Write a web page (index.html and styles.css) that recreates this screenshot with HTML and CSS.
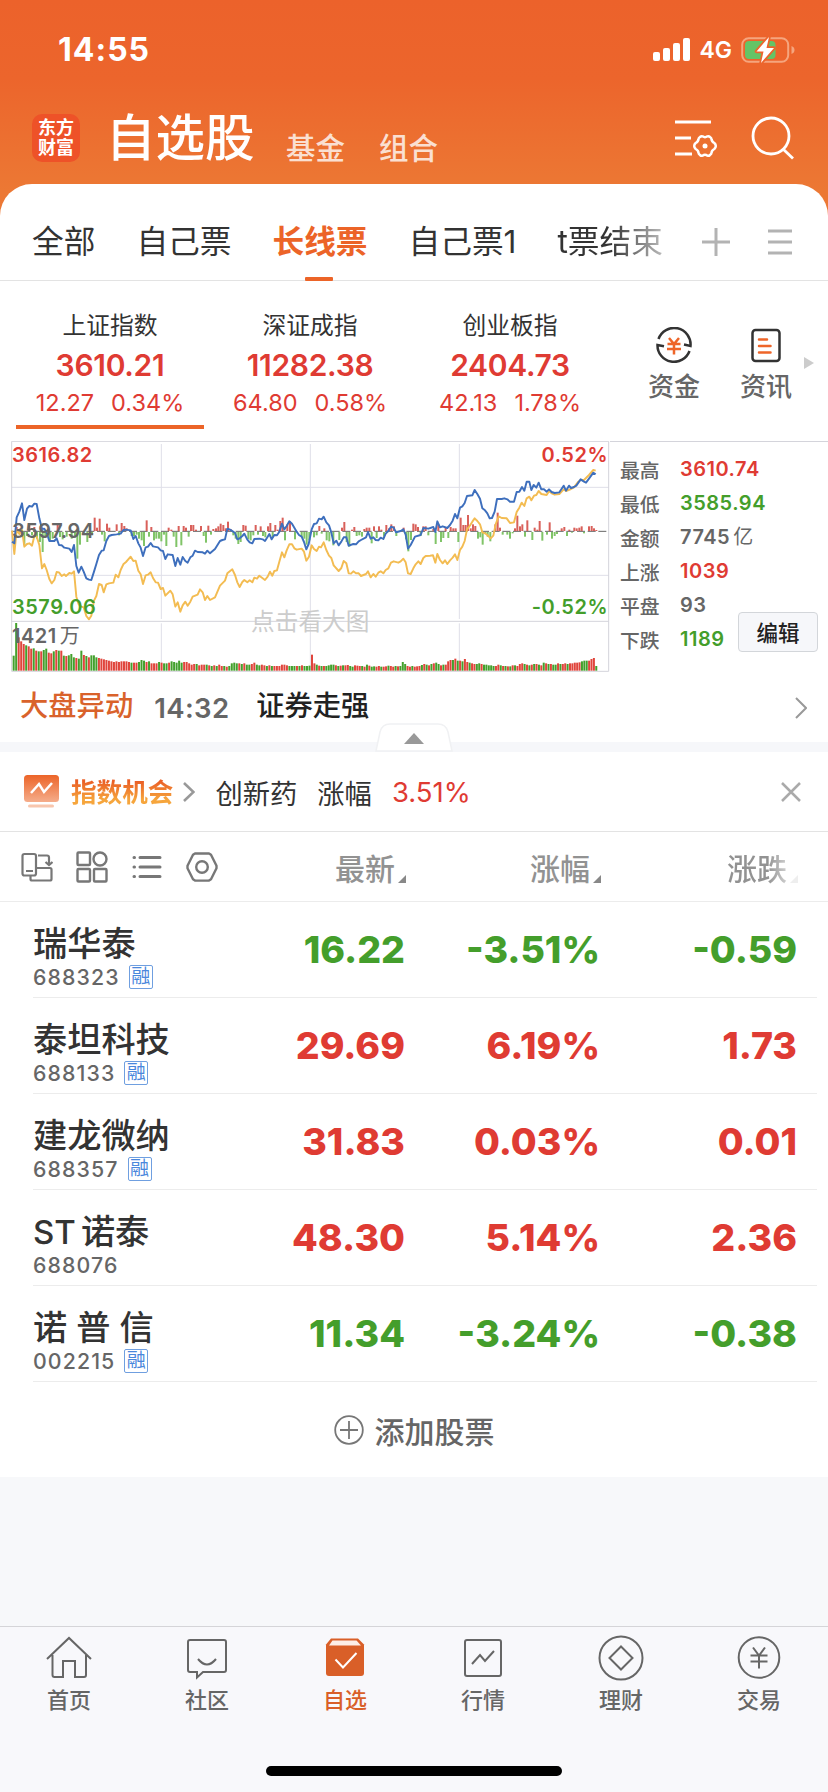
FILE: index.html
```html
<!DOCTYPE html>
<html lang="zh-CN">
<head>
  <meta charset="UTF-8">
  <meta name="viewport" content="width=device-width, initial-scale=1.0">
  <title>自选股</title>
  <link rel="stylesheet" href="styles.css">
</head>
<body>
  <header class="header">
    <div class="status-bar">
      <span class="time">14:55</span>
      <div class="status-right">
        <svg width="38" height="24" viewBox="0 0 38 24" fill="#fff">
          <rect x="0" y="14" width="7" height="9" rx="2"/>
          <rect x="10" y="10" width="7" height="13" rx="2"/>
          <rect x="20" y="5" width="7" height="18" rx="2"/>
          <rect x="30" y="0" width="7" height="23" rx="2"/>
        </svg>
        <span class="network">4G</span>
        <svg width="54" height="28" viewBox="0 0 54 28">
          <rect x="1.2" y="2.2" width="46" height="23.600" rx="6.500" fill="none" stroke="#f5a57e" stroke-width="2"/>
          <path d="M50.500 10v8q3-1.200 3-4t-3-4z" fill="#f5a57e"/>
          <rect x="4" y="5" width="30.500" height="18" rx="4" fill="#64c466"/>
          <path d="M28 1 15.500 15.500h7L20 27 33 12h-7.500z" fill="#fff" stroke="#ec652c" stroke-width="3.500" paint-order="stroke" stroke-linejoin="round"/>
        </svg>
      </div>
    </div>
    <div class="title-bar">
      <div class="logo"><span>东方</span><span>财富</span></div>
      <h1>自选股</h1>
      <span class="sub-title">基金</span>
      <span class="sub-title">组合</span>
      <svg class="icon-manage" width="44" height="40" viewBox="0 0 44 40" fill="none" stroke="#fff" stroke-width="2.800">
        <path d="M1 4h36M1 20h16M1 36h17"/>
        <path stroke-width="2.500" stroke-linejoin="round" d="M28.500 18.300q2.500 1.700 5 0 1.200-.5 2.500.7 1.500 1 1.500 2.200.2 2.500 2.800 3.800 1.500 1.300 1.500 3t-1.500 3q-2.600 1.300-2.800 3.800 0 1.200-1.500 2.200-1.300 1.200-2.500.7-2.500-1.700-5 0-1.200.5-2.500-.7-1.500-1-1.500-2.200-.2-2.500-2.800-3.800-1.500-1.300-1.500-3t1.500-3q2.600-1.300 2.800-3.800 0-1.200 1.500-2.200 1.300-1.200 2.500-.7z"/>
        <circle cx="31" cy="28" r="2.500" fill="#fff" stroke="none"/>
      </svg>
      <svg class="icon-search" width="44" height="44" viewBox="0 0 44 44" fill="none" stroke="#fff" stroke-width="2.800">
        <circle cx="20" cy="20" r="18"/>
        <path d="m32 33 10 9.500"/>
      </svg>
    </div>
  </header>

  <main class="card">
    <nav class="tabs">
      <span class="tab">全部</span>
      <span class="tab">自己票</span>
      <span class="tab active">长线票</span>
      <span class="tab">自己票1</span>
      <span class="tab fade">t票结束</span>
      <svg class="icon-plus" width="28" height="28" viewBox="0 0 28 28" stroke="#b3b3b3" stroke-width="3"><path d="M0 14h28M14 0v28"/></svg>
      <svg class="icon-menu" width="24" height="26" viewBox="0 0 24 26" stroke="#b3b3b3" stroke-width="3"><path d="M0 2h24M0 13h24M0 24h24"/></svg>
    </nav>

    <section class="indexes">
      <div class="index active">
        <div class="index-name">上证指数</div>
        <div class="index-value">3610.21</div>
        <div class="index-change"><span>12.27</span><span>0.34%</span></div>
      </div>
      <div class="index">
        <div class="index-name">深证成指</div>
        <div class="index-value">11282.38</div>
        <div class="index-change"><span>64.80</span><span>0.58%</span></div>
      </div>
      <div class="index">
        <div class="index-name">创业板指</div>
        <div class="index-value">2404.73</div>
        <div class="index-change"><span>42.13</span><span>1.78%</span></div>
      </div>
      <div class="shortcut first">
        <svg width="36" height="36" viewBox="0 0 36 36" fill="none" stroke="#333" stroke-width="2.500">
          <path d="M2.500 12A16.500 16.500 0 0 1 34.500 19l-6.500-1.500M33.500 24A16.500 16.500 0 0 1 1.500 18l6.500 1.200"/>
          <path stroke="#ee6529" d="m13 11 5 6 5-6M11.500 17h13M11 22h14M18 17v10.500"/>
        </svg>
        <span>资金</span>
      </div>
      <div class="shortcut">
        <svg width="36" height="36" viewBox="0 0 36 36" fill="none" stroke="#333" stroke-width="2.500">
          <rect x="4.500" y="3" width="27" height="31" rx="3"/>
          <path stroke="#ee6529" stroke-linecap="round" d="M11 12.500h8M11 19h11.500M11 25.500h11.500"/>
        </svg>
        <span>资讯</span>
      </div>
      <div class="more-arrow"></div>
    </section>

    <section class="quote">
      <div class="chart">
        <svg id="chart" width="599" height="232" viewBox="33 33 1797 696">
          <g fill="none" stroke="#dfdfe8" stroke-width="3">
            <path d="M35 172H1826M35 436H1826M484 42V567M931 42V567M1378 42V567M484 580V722M931 580V722M1378 580V722"/>
            <path stroke="#d4d4db" d="M35 34V724M35 34H1826M35 574H1826M35 724H1826M1826 34V724"/>
          </g>
          <path d="M35 304H1826" stroke="#666" stroke-width="3" stroke-dasharray="24 8"/>
          <g id="bars"></g>
          <polyline class="line avg" points="36,302 43,372 50,300 58,312 66,300 73,350 81,342 88,340 96,347 103,318 110,320 118,345 126,415 133,402 140,420 148,447 155,460 163,450 170,426 177,427 185,438 193,433 198,438 208,429 215,431 222,424 229,500 236,523 244,530 251,532 259,558 267,568 274,557 282,512 289,498 297,462 305,465 311,487 319,463 327,460 340,458 347,434 355,442 362,420 370,403 378,396 392,380 400,393 407,392 415,422 422,433 429,462 437,436 444,434 452,427 459,444 467,457 474,458 482,477 489,474 496,497 511,482 518,493 526,530 533,517 541,545 548,526 556,515 563,527 571,515 578,500 593,494 600,478 608,487 615,510 622,498 630,510 645,502 660,467 675,452 682,430 697,418 705,435 712,457 719,471 727,456 733,450 742,457 749,451 757,457 763,443 771,446 778,437 795,450 803,440 810,425 817,437 823,423 831,421 838,395 846,367 853,382 860,361 868,343 876,343 883,355 890,359 905,356 912,365 919,392 927,380 935,346 942,357 950,363 957,350 963,352 971,337 979,360 987,377 994,384 1001,406 1016,423 1024,414 1031,393 1039,400 1046,430 1053,431 1060,424 1068,430 1076,430 1083,438 1098,432 1104,424 1112,442 1120,432 1127,440 1135,428 1142,424 1150,430 1157,420 1165,415 1173,398 1181,394 1195,398 1202,394 1210,386 1217,397 1224,430 1232,432 1240,415 1247,403 1255,394 1262,402 1270,384 1277,378 1290,377 1299,376 1306,398 1312,372 1320,390 1328,400 1335,391 1342,402 1350,391 1358,383 1365,373 1372,390 1380,360 1387,350 1394,333 1401,298 1409,288 1417,275 1424,265 1432,273 1440,283 1447,307 1455,310 1462,315 1472,325 1480,317 1487,283 1496,259 1505,264 1520,265 1530,279 1542,277 1550,246 1558,233 1565,218 1573,228 1580,205 1588,200 1594,211 1602,197 1609,195 1616,183 1624,192 1640,195 1647,184 1655,190 1664,194 1678,192 1691,178 1698,183 1713,177 1722,172 1735,155 1742,150 1752,150 1767,135 1780,120 1787,122"/>
          <polyline class="line price" points="36,335 43,340 50,262 58,245 66,220 73,270 81,236 88,228 96,230 103,221 110,222 118,265 126,297 133,296 140,308 148,333 163,333 170,325 177,345 185,346 193,353 208,356 215,366 222,345 229,408 236,428 244,410 251,425 259,445 267,449 274,450 282,425 289,402 297,375 305,362 311,361 319,333 327,318 335,315 350,313 362,311 370,300 378,299 392,301 400,327 407,318 415,340 422,353 429,378 437,352 444,350 452,339 459,349 474,352 482,361 489,363 496,387 503,373 518,375 526,408 533,384 541,404 548,381 556,393 563,398 571,382 578,377 585,362 593,366 608,367 615,371 622,362 630,370 645,357 660,333 667,330 675,328 682,296 690,299 697,303 705,309 712,328 719,325 727,318 733,311 742,329 749,337 757,340 763,327 778,326 788,328 795,333 803,320 808,312 815,328 823,315 831,316 838,305 846,281 853,298 860,288 868,274 876,281 890,305 897,315 905,320 912,336 919,358 926,342 935,298 942,282 950,280 957,266 965,268 971,260 979,277 987,286 994,308 1001,340 1009,332 1016,346 1024,335 1031,322 1039,322 1046,347 1060,342 1068,343 1076,334 1083,330 1098,322 1104,306 1112,326 1120,322 1127,330 1135,331 1142,323 1150,327 1157,311 1165,303 1173,290 1181,293 1188,307 1202,303 1210,298 1217,314 1224,356 1232,345 1245,320 1262,315 1270,294 1285,296 1300,291 1306,306 1312,274 1320,292 1328,289 1342,294 1350,285 1358,272 1365,252 1372,265 1380,233 1387,229 1394,219 1401,198 1417,196 1424,180 1432,192 1440,206 1447,235 1455,241 1462,250 1469,265 1476,264 1484,245 1491,207 1505,207 1513,205 1522,208 1530,215 1542,215 1550,186 1558,185 1566,171 1573,182 1580,155 1588,155 1594,180 1601,165 1609,173 1616,158 1624,178 1632,178 1640,185 1647,178 1655,186 1664,189 1678,187 1691,167 1698,182 1707,167 1713,174 1722,171 1729,167 1742,148 1752,155 1758,158 1767,146 1780,128 1787,133"/>
        </svg>
        <span class="chart-label high">3616.82</span>
        <span class="chart-label mid">3597.94</span>
        <span class="chart-label low">3579.06</span>
        <span class="chart-label volume">1421<i>万</i></span>
        <span class="chart-label pct-high">0.52%</span>
        <span class="chart-label pct-low">-0.52%</span>
        <span class="chart-label hint">点击看大图</span>
      </div>
      <div class="stats">
        <div class="stat"><span>最高</span><b class="up">3610.74</b></div>
        <div class="stat"><span>最低</span><b class="down">3585.94</b></div>
        <div class="stat"><span>金额</span><b>7745<i>亿</i></b></div>
        <div class="stat"><span>上涨</span><b class="up">1039</b></div>
        <div class="stat"><span>平盘</span><b>93</b></div>
        <div class="stat"><span>下跌</span><b class="down">1189</b></div>
        <button class="edit">编辑</button>
      </div>
    </section>

    <section class="alert">
      <span class="alert-title">大盘异动</span>
      <span class="alert-time">14:32</span>
      <span class="alert-text">证券走强</span>
      <svg width="12" height="22" viewBox="0 0 12 22" fill="none" stroke="#999" stroke-width="2"><path d="m1 1 10 10L1 21"/></svg>
    </section>

    <div class="divider">
      <svg class="collapse" width="78" height="29" viewBox="0 0 78 29">
        <path d="M1 28 5 9Q7 1 15 1h48q8 0 10 8l4 19z" fill="#fff" stroke="#f0f1f3" stroke-width="1.500"/>
        <path d="M39 10 49 21H29z" fill="#999"/>
      </svg>
    </div>

    <section class="chance">
      <svg width="36" height="33" viewBox="0 0 36 33">
        <defs><linearGradient id="g" x2="0" y2="1"><stop stop-color="#ec6428"/><stop offset="1" stop-color="#f5ad8b"/></linearGradient></defs>
        <rect width="35" height="27" rx="3.500" fill="url(#g)"/>
        <rect x="4" y="29.500" width="26" height="3" rx="1.500" fill="#f8c6ad"/>
        <path d="m7 18 8-9 5 8 8-9" fill="none" stroke="#fff" stroke-width="2.500"/>
      </svg>
      <span class="chance-title">指数机会</span>
      <svg class="chance-arrow" width="12" height="20" viewBox="0 0 12 20" fill="none" stroke="#999" stroke-width="2.600"><path d="m1 1 9.500 9L1 19"/></svg>
      <span class="chance-name">创新药</span>
      <span class="chance-label">涨幅</span>
      <span class="chance-pct">3.51%</span>
      <svg class="chance-close" width="20" height="20" viewBox="0 0 20 20" stroke="#aaa" stroke-width="2.500"><path d="m1 1 18 18M19 1 1 19"/></svg>
    </section>

    <section class="list-head">
      <div class="tools">
        <svg width="32" height="32" viewBox="0 0 32 32" fill="none" stroke="#777" stroke-width="2.200">
          <rect x="1.500" y="3" width="13.500" height="21.500" rx="2"/>
          <path d="M5 20h7M17 4.500h9q2 0 2 2v7M24.500 11l3.500 3 3.500-3M15 17h14q1.500 0 1.500 1.500v9.500q0 1.500-1.500 1.500H11q-1.500 0-1.500-1.500v-3.500"/>
        </svg>
        <svg width="32" height="32" viewBox="0 0 32 32" fill="none" stroke="#777" stroke-width="2.400">
          <rect x="1.500" y="1.500" width="12.500" height="12.500" rx="1"/><circle cx="24" cy="8" r="6.500"/>
          <rect x="1.500" y="18" width="12.500" height="12.500" rx="1"/><rect x="18" y="18" width="12.500" height="12.500" rx="1"/>
        </svg>
        <svg width="32" height="32" viewBox="0 0 32 32" stroke="#777" stroke-width="3" stroke-linecap="round">
          <path d="M9 6.500h20M9 16h20M9 25.500h20M3 6.500h.5M3 16h.5M3 25.500h.5"/>
        </svg>
        <svg width="32" height="32" viewBox="0 0 32 32" fill="none" stroke="#777" stroke-width="2.400">
          <path stroke-linejoin="round" d="M9 2.500h14l2 1.300 5.500 11v2.500l-5.500 11-2 1.300H9l-2-1.300-5.500-11v-2.500L7 3.800z"/>
          <circle cx="16" cy="16" r="5.800"/>
        </svg>
      </div>
      <span class="col">最新</span>
      <span class="col">涨幅</span>
      <span class="col faded">涨跌</span>
    </section>

    <section class="stocks">
      <div class="stock">
        <div class="stock-info"><div class="name">瑞华泰</div><div class="code">688323<em>融</em></div></div>
        <span class="down">16.22</span><span class="down">-3.51%</span><span class="down">-0.59</span>
      </div>
      <div class="stock">
        <div class="stock-info"><div class="name">泰坦科技</div><div class="code">688133<em>融</em></div></div>
        <span class="up">29.69</span><span class="up">6.19%</span><span class="up">1.73</span>
      </div>
      <div class="stock">
        <div class="stock-info"><div class="name">建龙微纳</div><div class="code">688357<em>融</em></div></div>
        <span class="up">31.83</span><span class="up">0.03%</span><span class="up">0.01</span>
      </div>
      <div class="stock">
        <div class="stock-info"><div class="name"><i>ST</i>诺泰</div><div class="code">688076</div></div>
        <span class="up">48.30</span><span class="up">5.14%</span><span class="up">2.36</span>
      </div>
      <div class="stock">
        <div class="stock-info"><div class="name">诺 普 信</div><div class="code">002215<em>融</em></div></div>
        <span class="down">11.34</span><span class="down">-3.24%</span><span class="down">-0.38</span>
      </div>
    </section>

    <div class="add">
      <svg width="30" height="30" viewBox="0 0 30 30" fill="none" stroke="#777" stroke-width="1.800"><circle cx="15" cy="15" r="13.800"/><path d="M15 6v18M6 15h18"/></svg>
      <span>添加股票</span>
    </div>
  </main>

  <footer class="tab-bar">
    <div class="tab-items">
      <div class="item">
        <svg width="46" height="46" viewBox="0 0 46 46"><path d="M1 24 23 3l22 21M6.500 20v20q0 2 2 2H17V26h12v16h9q2 0 2-2V20"/></svg>
        <span>首页</span>
      </div>
      <div class="item">
        <svg width="46" height="46" viewBox="0 0 46 46"><path d="M6 5h34q2 0 2 2v28q0 2-2 2H19l-6 5.500V37H6q-2 0-2-2V7q0-2 2-2zM14 24q9 11 18 0"/></svg>
        <span>社区</span>
      </div>
      <div class="item active">
        <svg width="46" height="46" viewBox="0 0 46 46">
          <path d="M4 9.500 9 3.500h27l6 6V38q0 3-3 3H7q-3 0-3-3z" class="solid"/>
          <path d="M10.500 5.500h24l4.500 5H7z" class="paper"/>
          <path d="m13.500 24.500 7.500 8 13.500-14.500" class="check"/>
        </svg>
        <span>自选</span>
      </div>
      <div class="item">
        <svg width="46" height="46" viewBox="0 0 46 46"><rect x="5" y="5" width="36" height="36" rx="2"/><path d="m12 29 8-9 5 6 9-10"/></svg>
        <span>行情</span>
      </div>
      <div class="item">
        <svg width="46" height="46" viewBox="0 0 46 46"><circle cx="23" cy="23" r="21.500"/><path d="M23 11.500 34.500 23 23 34.500 11.500 23z"/></svg>
        <span>理财</span>
      </div>
      <div class="item">
        <svg width="46" height="46" viewBox="0 0 46 46"><circle cx="23" cy="22.500" r="20.300"/><path d="m17 12.500 6 8 6-8M14.500 20.500h17M14.500 26.500h17M23 20v13.500"/></svg>
        <span>交易</span>
      </div>
    </div>
    <div class="home-indicator"></div>
  </footer>
  <script src="chart.js"></script>
</body>
</html>
```
FILE: chart.js
```js
// momentum bars around the previous close: [x, height], negative = down
const momentum = [
  [50,12],[58,-5],[66,-15],[73,-40],[81,-12],[88,20],[96,-10],[103,12],[111,-20],[120,-30],[128,-60],[136,-18],[150,-30],[158,-20],[173,24],[180,-15],[188,-22],[200,-14],[215,-20],[225,-16],[232,-80],[240,-38],[262,-30],[270,-10],[276,-8],[284,40],[291,10],[299,37],[306,-8],[314,-28],[321,22],[328,10],[350,20],[357,-10],[365,24],[373,15],[380,8],[395,-12],[402,-12],[410,-8],[417,-20],[425,-25],[432,-42],[440,32],[447,-14],[454,12],[462,-25],[469,-20],[477,-20],[484,-28],[492,-8],[499,-42],[506,10],[514,4],[521,-14],[529,-45],[536,15],[544,-40],[551,15],[558,10],[566,-14],[573,18],[580,18],[588,4],[603,15],[611,-12],[618,-32],[625,16],[633,-8],[640,6],[648,8],[655,14],[662,22],[670,18],[677,8],[684,28],[692,6],[700,-10],[707,-20],[715,-36],[722,-30],[730,18],[737,16],[745,-22],[752,-25],[760,-10],[767,18],[774,-8],[782,14],[789,-12],[796,-16],[804,14],[811,24],[818,-16],[826,18],[833,4],[841,30],[848,40],[855,-25],[862,20],[870,28],[885,-22],[905,-15],[913,-20],[920,-38],[928,-25],
  [942,-16],[950,-10],[958,15],[965,-5],[973,8],[980,-25],[988,-28],[1000,-40],[1018,-24],[1026,10],[1033,27],[1040,-30],[1048,-44],[1056,4],[1063,12],[1070,-12],[1078,-10],[1086,-14],[1093,6],[1100,10],[1108,10],[1115,-34],[1122,14],[1130,-18],[1137,14],[1144,4],[1152,-14],[1159,18],[1167,8],[1174,20],[1182,14],[1189,-12],[1211,10],[1218,-22],[1225,-58],[1233,-24],[1240,22],[1247,20],[1254,12],[1262,-12],[1270,14],[1277,14],[1285,-10],[1300,6],[1307,-36],[1315,20],[1323,-30],[1330,-18],[1337,10],[1345,-18],[1352,12],[1360,8],[1367,8],[1375,-30],[1382,40],[1390,18],[1397,18],[1404,48],[1412,8],[1419,20],[1426,15],[1434,-20],[1441,-16],[1448,-38],[1456,-6],[1463,-14],[1471,-28],[1486,20],[1493,55],[1500,10],[1508,-8],[1522,-8],[1530,-20],[1538,-4],[1545,8],[1552,46],[1560,14],[1567,20],[1575,-14],[1582,32],[1597,-24],[1604,10],[1612,4],[1619,30],[1627,-26],[1641,-8],[1649,26],[1656,-20],[1664,-12],[1671,-6],[1685,8],[1693,12],[1701,-12],[1708,4],[1716,-2],[1723,10],[1730,8],[1738,10],[1745,14],[1752,-4],[1767,14],[1775,15],[1782,8],[1789,3]
];

// volume, negative = closed lower
const morning = [
  -45,-143,100,88,80,-76,73,66,-67,60,-58,58,-62,-66,54,52,-58,62,-60,60,-45,44,-46,-50,-40,38,-36,-60,47,-44,40,-46,-46,-40,38,36,34,32,30,28,26,28,26,28,28,28,26,-24,24,24,-26,-32,-30,26,-28,22,22,22,-26,24,-22,-22,24,-28,-26,-24,-30,-24,26,26,22,18,20,-20,16,18,18,-18,16,-14,16,-14,18,14,-14,12,-14,-22,-24,-22,22,-20,22,-18,-18,20,24,-18,-16,18,16,-14,16,-14,14,14,14,18,18,16,-14,-14,-14,14,-14,16,-14,-14,-15
];
const afternoon = [
  48,22,-18,15,-14,14,-14,-16,-18,-18,16,-14,15,-16,16,17,-14,-12,16,15,14,-14,12,-18,15,-12,-13,12,14,-12,12,13,-15,14,12,-14,13,-14,-26,-20,14,12,-14,12,13,14,-17,20,-18,16,-20,22,-24,-20,16,-18,18,28,32,-32,36,-30,30,-28,35,26,-24,22,20,-20,-22,20,-18,-18,-16,-16,-14,14,18,-16,14,-14,13,-13,16,-16,14,20,22,-20,18,-16,18,-20,20,-18,16,-24,22,-20,20,-18,-18,22,-20,20,22,-20,22,22,24,24,25,-28,-30,-30,30,35,38,-14
];

const bars = document.getElementById("bars");

function addBar(x, y, height, color) {
  const rect = document.createElementNS("http://www.w3.org/2000/svg", "rect");
  rect.setAttribute("x", x);
  rect.setAttribute("y", y);
  rect.setAttribute("width", 6);
  rect.setAttribute("height", height);
  rect.setAttribute("fill", color);
  bars.appendChild(rect);
}

momentum.forEach(([x, v]) => {
  if (v > 0) {
    addBar(x - 3, 303 - v, v, "#d9605a");
  } else {
    addBar(x - 3, 306, -v, "#80c468");
  }
});

function addSession(data, start, end) {
  const step = (end - start) / data.length;
  data.forEach((v, i) => {
    addBar(start + i * step, 722 - Math.abs(v), Math.abs(v), v > 0 ? "#e0453c" : "#43a02c");
  });
}

addSession(morning, 38, 933);
addSession(afternoon, 933, 1793);
```
FILE: styles.css
```css
* {
  box-sizing: border-box;
}

body {
  margin: 0;
  width: 828px;
  height: 1792px;
  display: flex;
  flex-direction: column;
  background: #f7f8fa;
  color: #333;
  font-family: Inter, "Noto Sans CJK SC", sans-serif;
  overflow: hidden;
}

svg {
  display: block;
  flex: none;
}

.up { color: #df3b33; }
.down { color: #449e2b; }

/* header */
.header {
  height: 224px;
  flex: none;
  background: linear-gradient(#ec622b 0, #ec652c 35%, #ec7834 85%);
  color: #fff;
}

.status-bar {
  display: flex;
  justify-content: space-between;
  height: 99px;
  padding: 0 33px 0 58px;
  align-items: center;
}

.time {
  font-size: 32px;
  font-weight: 700;
  letter-spacing: 1px;
}

.status-right {
  display: flex;
  align-items: center;
}

.network {
  margin: 0 9px 0 8px;
  font-size: 23px;
  font-weight: 600;
}

.title-bar {
  display: flex;
  align-items: center;
  height: 78px;
  padding-left: 32px;
}

.logo {
  display: flex;
  flex-direction: column;
  width: 48px;
  height: 48px;
  padding-top: 4px;
  border-radius: 10px;
  background: #ee5228;
  font-size: 18px;
  font-weight: 700;
  line-height: 20px;
  text-align: center;
}

.title-bar h1 {
  width: 150px;
  margin: 0 30px 0 26px;
  font-size: 49.500px;
  font-weight: 500;
  line-height: 60px;
  white-space: nowrap;
}

.sub-title {
  margin: 19px 34px 0 0;
  font-size: 29.500px;
  font-weight: 500;
  line-height: 36px;
  color: rgba(255, 255, 255, 0.8);
}

.icon-manage {
  margin-left: 202px;
}

.icon-search {
  margin-left: 33px;
}

/* white card */
.card {
  flex: none;
  height: 1293px;
  margin-top: -40px;
  border-radius: 32px 32px 0 0;
  background: #fff;
}

.tabs {
  display: flex;
  align-items: center;
  height: 97px;
  padding: 19px 36px 0 32px;
  border-bottom: 1px solid #e3e3e3;
  font-size: 31.700px;
}

.tab {
  position: relative;
  margin-right: 41px;
  line-height: 76px;
  white-space: nowrap;
}

.tab.active {
  color: #ec6428;
  font-weight: 700;
}

.tab.active::after {
  content: "";
  position: absolute;
  left: 33px;
  bottom: -1px;
  width: 28px;
  height: 4px;
  border-radius: 1px;
  background: #ec6428;
}

.tab.fade {
  margin-right: auto;
  background: linear-gradient(90deg, #333 50%, #bbb);
  background-clip: text;
  color: transparent;
}

.icon-menu {
  margin-left: 38px;
}

/* index summary */
.indexes {
  display: flex;
  height: 160px;
  padding: 26px 0 0 16px;
}

.index {
  width: 188px;
  height: 122px;
  margin-right: 12px;
  text-align: center;
}

.index.active {
  border-bottom: 4px solid #ec6428;
}

.index-name {
  font-size: 23.800px;
  line-height: 38px;
}

.index-value {
  font-size: 30px;
  font-weight: 600;
  line-height: 40px;
  letter-spacing: -0.3px;
  color: #df3b33;
}

.index-change {
  display: flex;
  justify-content: center;
  gap: 17px;
  font-size: 23.500px;
  line-height: 36px;
  color: #df3b33;
}

.shortcut {
  display: flex;
  flex-direction: column;
  align-items: center;
  width: 92px;
  padding-top: 20px;
  font-size: 26px;
  font-weight: 500;
  line-height: 47px;
  color: #666;
}

.shortcut.first {
  margin-left: 12px;
}

.more-arrow {
  width: 0;
  height: 0;
  margin: 50px 0 0 -8px;
  border: 6px solid transparent;
  border-left: 10px solid #ccc;
  border-right: none;
}

/* chart */
.quote {
  display: flex;
  height: 232px;
  padding-left: 11px;
}

.chart {
  position: relative;
  width: 599px;
}

.line {
  fill: none;
  stroke-width: 5.800;
  stroke-linejoin: round;
}

.avg { stroke: #f3bc52; }
.price { stroke: #3e6fbd; }

.chart-label {
  position: absolute;
  left: 1px;
  font-size: 20px;
  font-weight: 600;
  line-height: 24px;
  letter-spacing: 0.5px;
  color: #666;
}

.chart-label i {
  margin-left: 3px;
  font-style: normal;
  font-weight: 400;
}

.high { top: 2px; color: #df3b33; }
.mid { top: 78px; }
.low { top: 154px; color: #449e2b; }
.volume { top: 183px; }

.pct-high {
  top: 2px;
  left: auto;
  right: 2px;
  color: #df3b33;
}

.pct-low {
  top: 154px;
  left: auto;
  right: 2px;
  color: #449e2b;
}

.hint {
  top: 166px;
  left: 240px;
  font-size: 23.700px;
  font-weight: 400;
  letter-spacing: 0;
  line-height: 30px;
  color: #ccc;
}

.stats {
  position: relative;
  flex: 1;
  padding: 10px 0 0 10px;
  border-top: 1px solid #d4d4db;
}

.stat {
  display: flex;
  height: 34px;
  align-items: center;
  font-size: 19.800px;
  font-weight: 500;
  color: #666;
}

.stat span {
  width: 60px;
}

.stat b {
  font-size: 20px;
  font-weight: 600;
  line-height: 24px;
  letter-spacing: 0.5px;
}

.stat i {
  margin-left: 3px;
  font-style: normal;
  font-weight: 400;
}

.stat .up { color: #df3b33; }
.stat .down { color: #449e2b; }

.edit {
  position: absolute;
  top: 170px;
  right: 10px;
  width: 80px;
  height: 40px;
  padding: 0 0 2px;
  border: 1px solid #d3d6da;
  border-radius: 4px;
  background: #f6f7fa;
  color: #222;
  font: 500 21.500px "Noto Sans CJK SC", sans-serif;
}

/* market alert */
.alert {
  display: flex;
  align-items: center;
  height: 69px;
  padding: 0 21px 0 20px;
  font-size: 28.300px;
  line-height: 40px;
}

.alert-title {
  margin-top: -3px;
  color: #d9622b;
  font-weight: 500;
}

.alert-time {
  width: 102px;
  margin-left: 21px;
  font-size: 27.500px;
  font-weight: 600;
  letter-spacing: 0.4px;
  color: #666;
}

.alert-text {
  margin-top: -3px;
  color: #222;
  font-weight: 500;
}

.alert svg {
  margin-left: auto;
}

.divider {
  position: relative;
  height: 10px;
  background: #f6f7fa;
}

.collapse {
  position: absolute;
  left: 375px;
  bottom: 0;
}

.chance {
  display: flex;
  align-items: center;
  height: 80px;
  padding: 0 27px 0 24px;
  border-bottom: 1px solid #e3e3e3;
  font-size: 27.300px;
}

.chance-title {
  margin: -2px 0 0 11px;
  font-size: 25.600px;
  font-weight: 700;
  background: linear-gradient(#ea5f26 25%, #f6a53c 75%);
  background-clip: text;
  color: transparent;
}

.chance-arrow {
  margin: 0 20px 0 10px;
}

.chance-label {
  margin: 0 20px 0 20px;
}

.chance-pct {
  font-size: 27.500px;
  color: #df3b33;
}

.chance-close {
  margin-left: auto;
}

/* stock table */
.list-head,
.stock {
  display: grid;
  grid-template-columns: 205px 167px 195px 197px;
}

.list-head {
  align-items: center;
  height: 70px;
  padding-left: 33px;
  border-bottom: 1px solid #ececec;
}

.tools {
  display: flex;
  gap: 23px;
  margin-left: -12px;
}

.col {
  position: relative;
  padding-right: 10px;
  font-size: 30px;
  font-weight: 500;
  text-align: right;
  color: #929292;
}

.col::after {
  content: "";
  position: absolute;
  right: -1px;
  bottom: 6px;
  border: 4px solid #888;
  border-top-color: transparent;
  border-left-color: transparent;
}

.col.faded {
  background: linear-gradient(90deg, #929292 85%, #eee);
  background-clip: text;
  color: transparent;
}

.col.faded::after {
  border-right-color: #eee;
  border-bottom-color: #eee;
}

.stocks {
  margin: 0 11px 0 33px;
}

.stock {
  height: 96px;
  border-bottom: 1px solid #ececec;
}

.stock > span {
  padding-top: 26px;
  font-size: 37.500px;
  font-weight: 800;
  line-height: 44px;
  text-align: right;
}

.name {
  margin-top: 20px;
  font-size: 34.200px;
  font-weight: 500;
  line-height: 44px;
  white-space: nowrap;
}

.name i {
  margin-right: 5px;
  font-size: 33px;
  font-style: normal;
}

.code {
  display: flex;
  align-items: center;
  height: 24px;
  margin-top: -1px;
  font-size: 21.300px;
  font-weight: 500;
  letter-spacing: 1.1px;
  color: #666;
}

.code em {
  width: 24px;
  height: 24px;
  margin-left: 9px;
  border: 1px solid #6f9fe0;
  border-radius: 2px;
  font-size: 19px;
  font-style: normal;
  font-weight: 400;
  line-height: 21px;
  text-align: center;
  letter-spacing: 0;
  color: #4a87dc;
}

.add {
  display: flex;
  align-items: center;
  justify-content: center;
  gap: 11px;
  height: 96px;
  font-size: 30px;
  font-weight: 500;
  color: #666;
}

/* bottom tab bar */
.tab-bar {
  height: 166px;
  margin-top: auto;
  border-top: 1px solid #d5d5d8;
  background: #f8f8fb;
}

.tab-items {
  display: flex;
  height: 139px;
}

.item {
  display: flex;
  flex: 1;
  flex-direction: column;
  align-items: center;
  padding-top: 8px;
  font-size: 22px;
  line-height: 38px;
  font-weight: 500;
  color: #666;
}

.item svg {
  fill: none;
  stroke: #666;
  stroke-width: 2;
}

.item.active {
  color: #d95f28;
}

.item .solid {
  fill: #d95f28;
  stroke: none;
}

.item .paper {
  fill: #fdeee6;
  stroke: none;
}

.item .check {
  stroke: #fff;
  stroke-width: 2;
}

.home-indicator {
  width: 296px;
  height: 10px;
  margin: 0 auto;
  border-radius: 5px;
  background: #000;
}
```
